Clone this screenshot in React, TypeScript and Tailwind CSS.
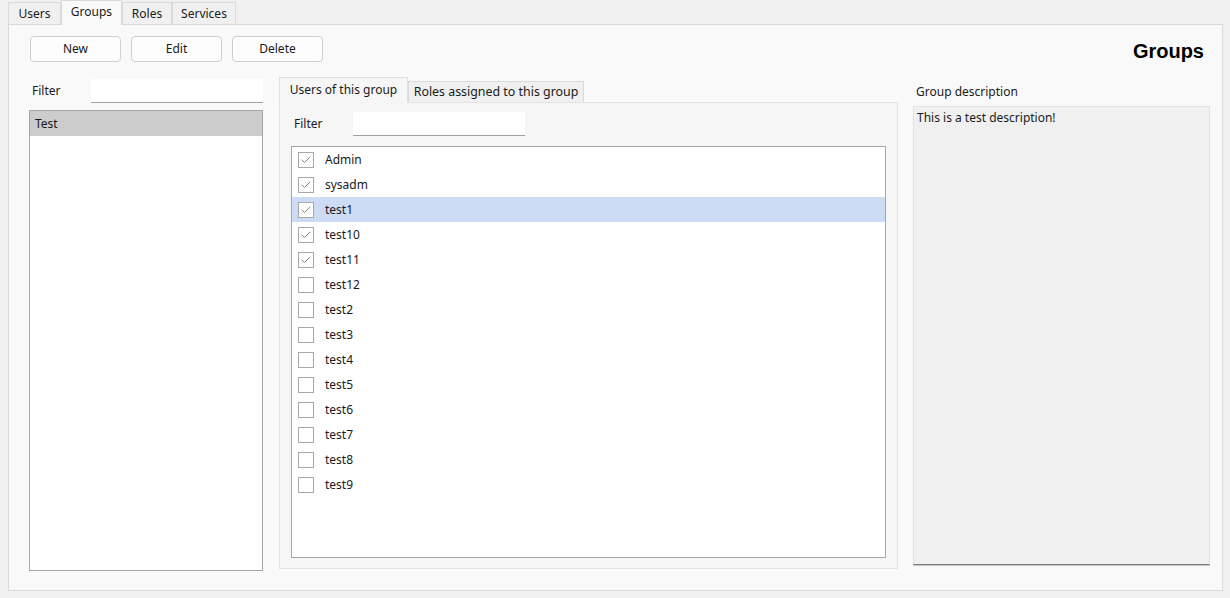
import { Check } from "lucide-react";

const users = [
  { name: "Admin", checked: true },
  { name: "sysadm", checked: true },
  { name: "test1", checked: true, selected: true },
  { name: "test10", checked: true },
  { name: "test11", checked: true },
  { name: "test12" },
  { name: "test2" },
  { name: "test3" },
  { name: "test4" },
  { name: "test5" },
  { name: "test6" },
  { name: "test7" },
  { name: "test8" },
  { name: "test9" },
];

const outerTabs = [
  { title: "Users", width: "w-[53px]" },
  { title: "Groups", width: "w-[61px]", active: true },
  { title: "Roles", width: "w-[50px]" },
  { title: "Services", width: "w-[64px]" },
];

const App = () => {
  return (
    <div
      className="flex h-[598px] w-[1230px] flex-col bg-[#f0f0f0] text-[12px] text-[#1a1a1a]"
      style={{ fontFamily: '"Noto Sans", "Open Sans", sans-serif' }}
    >
      {/* top tab strip */}
      <div className="flex h-[24px] items-end pl-[8px]">
        {outerTabs.map((tab) =>
          tab.active ? (
            <div
              key={tab.title}
              className={`relative z-10 -mb-px flex h-[25px] items-start justify-center border border-b-0 border-[#dadada] bg-[#f9f9f9] pt-[2px] ${tab.width}`}
            >
              {tab.title}
            </div>
          ) : (
            <div
              key={tab.title}
              className={`flex h-[22px] items-center justify-center border border-b-0 border-[#dadada] bg-[#f0f0f0] ${tab.width}`}
            >
              {tab.title}
            </div>
          ),
        )}
      </div>

      {/* tab page */}
      <div className="mb-[7px] mr-[7px] ml-[8px] flex flex-1 flex-col border border-[#dadada] bg-[#f9f9f9] pl-[20px] pr-[12px]">
        <div className="flex h-[53px] items-start justify-between pt-[11px]">
          <div className="flex gap-[10px] pl-px">
            {["New", "Edit", "Delete"].map((b) => (
              <button
                key={b}
                className="flex h-[26px] w-[91px] items-center justify-center rounded-[4px] border border-[#cfcfcf] bg-[#fdfdfd] text-[12px]"
              >
                {b}
              </button>
            ))}
          </div>
          <div
            className="pr-[6px] text-[20px] font-bold text-black"
            style={{ fontFamily: '"Liberation Sans", Arial, sans-serif' }}
          >
            Groups
          </div>
        </div>

        <div className="flex flex-1 pb-[19px]">
          {/* left column */}
          <div className="flex w-[234px] flex-col">
            <div className="mt-[1px] flex h-[24px] items-center">
              <span className="w-[62px] pl-[3px]">Filter</span>
              <div className="h-[24px] flex-1 border-b border-[#a0a0a0] bg-white" />
            </div>
            <div className="mt-[7px] flex-1 border border-[#a6a6a6] bg-white">
              <div className="flex h-[25px] items-center bg-[#cccccc] pl-[5px]">Test</div>
            </div>
          </div>

          {/* middle column */}
          <div className="ml-[16px] flex w-[619px] flex-col pb-[2px]">
            <div className="flex h-[24px] items-end">
              <div className="relative z-10 -mb-px flex h-[26px] w-[129px] items-start justify-center border border-b-0 border-[#e0e0e0] bg-[#f6f6f6] pt-[3px]">
                Users of this group
              </div>
              <div className="flex h-[21px] w-[176px] items-center justify-center border border-b-0 border-[#dadada] bg-[#f0f0f0] text-[12.4px]">
                Roles assigned to this group
              </div>
            </div>
            <div className="flex flex-1 flex-col border border-[#e3e3e3] bg-[#f6f6f6] px-[11px] pb-[10px]">
              <div className="flex h-[43px] items-center pb-[1px]">
                <span className="w-[62px] pl-[3px]">Filter</span>
                <div className="h-[24px] w-[172px] border-b border-[#a0a0a0] bg-white" />
              </div>
              <div className="flex-1 border border-[#a6a6a6] bg-white">
                {users.map((u) => (
                  <div
                    key={u.name}
                    className={
                      u.selected
                        ? "flex h-[25px] items-center bg-[#cddcf4] pl-[6px]"
                        : "flex h-[25px] items-center pl-[6px]"
                    }
                  >
                    <div className="flex h-[16px] w-[16px] items-center justify-center border border-[#a8a8a8] bg-white">
                      {u.checked && <Check size={12} strokeWidth={1.8} color="#767676" />}
                    </div>
                    <span className="ml-[11px]">{u.name}</span>
                  </div>
                ))}
              </div>
            </div>
          </div>

          {/* right column */}
          <div className="ml-[15px] flex flex-1 flex-col pb-[6px]">
            <div className="flex h-[26px] items-center pl-[3px] pt-[1px]">Group description</div>
            <div className="mt-[2px] flex-1 border border-[#e2e2e2] border-b-[#7a7a7a] bg-[#f0f0f0] px-[3px] pt-[2px] shadow-[0_1px_0_#c8c8c8]">
              This is a test description!
            </div>
          </div>
        </div>
      </div>
    </div>
  );
};

export default App;
